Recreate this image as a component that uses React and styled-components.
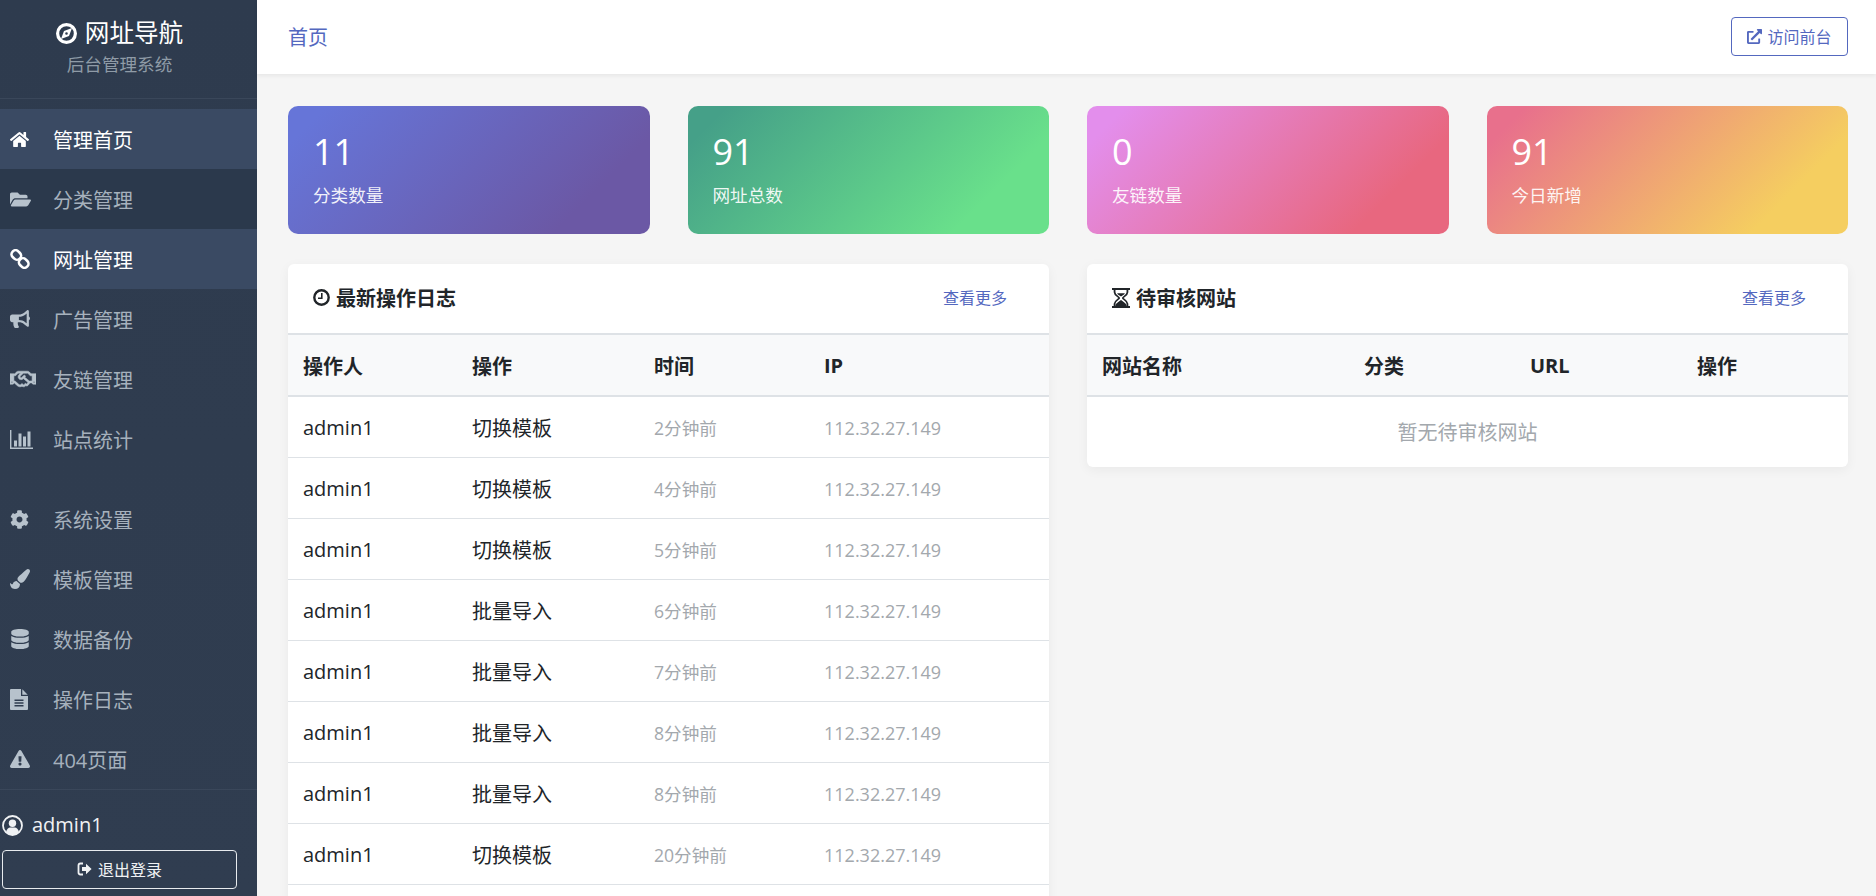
import React from "react";
import styled, { createGlobalStyle } from "styled-components";
import {
  FaHome, FaFolderOpen, FaBullhorn, FaRegHandshake, FaCog, FaPaintBrush,
  FaDatabase, FaExclamationTriangle, FaExternalLinkAlt,
} from "react-icons/fa";

const Global = createGlobalStyle`
  html, body { margin: 0; padding: 0; height: 100%; overflow: hidden; }
  body { font-family: "Open Sans", "Noto Sans CJK SC", sans-serif; background: #f5f5f5; color: #212529; }
  * { box-sizing: border-box; }
`;

const CompassIcon = () => (
  <svg width="21" height="21" viewBox="0 0 21 21">
    <circle cx="10.5" cy="10.5" r="8.9" fill="none" stroke="currentColor" strokeWidth="3.2" />
    <path fillRule="evenodd" fill="currentColor" d="M16 5 13 13 5 16 8 8ZM10.5 9.2a1.3 1.3 0 1 0 0 2.6 1.3 1.3 0 0 0 0-2.6Z" />
  </svg>
);
const UserCircleIcon = () => (
  <svg width="21" height="21" viewBox="0 0 21 21">
    <circle cx="10.5" cy="10.5" r="9.5" fill="none" stroke="currentColor" strokeWidth="1.8" />
    <circle cx="10.5" cy="8.2" r="3.7" fill="currentColor" />
    <path fill="currentColor" d="M4 17.4C4.4 14 6.6 12.4 8.2 12.4h4.6c1.6 0 3.8 1.6 4.2 5a9.5 9.5 0 0 1-13 0Z" />
  </svg>
);
const SignOutIcon = () => (
  <svg width="15" height="14" viewBox="0 0 15 14">
    <path fill="none" stroke="currentColor" strokeWidth="1.8" d="M6 1.5H3.4Q1.5 1.5 1.5 3.4V10.6Q1.5 12.5 3.4 12.5H6" />
    <path fill="currentColor" d="M5 5H9V1.8L14.6 7 9 12.2V9H5Z" />
  </svg>
);
const ClockIcon = () => (
  <svg width="17" height="17" viewBox="0 0 17 17">
    <circle cx="8.5" cy="8.5" r="7.2" fill="none" stroke="currentColor" strokeWidth="2.4" />
    <path fill="none" stroke="currentColor" strokeWidth="1.6" d="M8.8 4V9.2H5" />
  </svg>
);
const HourglassIcon = () => (
  <svg width="18" height="20" viewBox="0 0 14 19" preserveAspectRatio="none">
    <path fill="currentColor" d="M0 0H14V2H0ZM0 17H14V19H0Z" />
    <path fill="none" stroke="currentColor" strokeWidth="1.4" d="M2 2V4C2 7 5.6 8.4 5.6 9.5 5.6 10.6 2 12 2 15V17M12 2V4C12 7 8.4 8.4 8.4 9.5 8.4 10.6 12 12 12 15V17" />
    <path fill="currentColor" d="M2.6 17C2.6 14.4 6 13 7 11.2 8 13 11.4 14.4 11.4 17ZM4 5H10C9.8 6.2 8 7.4 7 8 6 7.4 4.2 6.2 4 5Z" />
  </svg>
);
const ChainIcon = () => (
  <svg width="20" height="20" viewBox="0 0 20 20">
    <g fill="none" stroke="currentColor" strokeWidth="2.6">
      <rect x="1.3" y="2" width="10" height="8" rx="3.8" transform="rotate(45 6.3 6)" />
      <rect x="8.7" y="10" width="10" height="8" rx="3.8" transform="rotate(45 13.7 14)" />
    </g>
  </svg>
);
const BarsIcon = () => (
  <svg width="23" height="19" viewBox="0 0 23 19">
    <path fill="currentColor" d="M0 0H1.4V17.5H23V19H0ZM4 10.5H7V16.5H4ZM8.5 3.5H11.5V16.5H8.5ZM13 6.5H16V16.5H13ZM17.5 1.5H20.5V16.5H17.5Z" />
  </svg>
);
const FileIcon = () => (
  <svg width="18" height="21" viewBox="0 0 18 21">
    <path fill="currentColor" fillRule="evenodd" d="M1 0H11V7H18V20Q18 21 17 21H1Q0 21 0 20V1Q0 0 1 0ZM12.3 0.3 17.7 5.7H12.3ZM4.5 10.5V12H13.5V10.5ZM4.5 13.3V14.8H13.5V13.3ZM4.5 16.1V17.6H13.5V16.1Z" />
  </svg>
);

const Layout = styled.div`display: flex; height: 896px; overflow: hidden;`;

const Sidebar = styled.aside`
  width: 257px; flex: none; height: 896px; display: flex; flex-direction: column;
  background: linear-gradient(180deg, #2e3b4e 0%, #303d50 100%);
`;
const Brand = styled.div`
  height: 99px; padding: 15px 18px 0 0; text-align: center; flex: none;
  border-bottom: 1px solid #3a475a;
`;
const BrandTitle = styled.div`
  display: flex; align-items: center; justify-content: center; gap: 8px;
  font-size: 24.6px; line-height: 36px; color: #fff;
`;
const BrandSub = styled.div`font-size: 17.6px; line-height: 26px; color: #8f9ba7;`;

const Nav = styled.nav`flex: 1; padding-top: 10px;`;
const NavGroup = styled.div`margin-bottom: 20px;`;
const NavItem = styled.a`
  display: flex; align-items: center; height: 60px; padding-left: 10px; font-size: 20px;
  color: ${(p) => (p.$active ? "#fff" : "#a6b1bd")};
  background: ${(p) => (p.$active ? "#3a4a63" : p.$dim ? "#2b394c" : "transparent")};
`;
const NavIcon = styled.span`
  width: 43px; flex: none; display: flex; align-items: center;
  color: ${(p) => (p.$active ? "#fff" : "#b7c2cc")};
`;

const SideFoot = styled.div`
  height: 107px; flex: none; border-top: 1px solid #3a475a; padding: 23px 20px 0 2px;
`;
const UserRow = styled.div`
  display: flex; align-items: center; gap: 9px; font-size: 20px; font-weight: 500; line-height: 24px; color: #f0f2f4;
`;
const Logout = styled.button`
  width: 235px; height: 39px; margin-top: 13px; display: flex; align-items: center; justify-content: center; gap: 6px;
  background: transparent; border: 1px solid #e8ebee; border-radius: 4px; color: #f0f2f4;
  font-family: inherit; font-size: 16px; padding: 0 0 2px;
`;

const Main = styled.main`flex: 1; min-width: 0; display: flex; flex-direction: column;`;
const TopBar = styled.header`
  height: 74px; flex: none; background: #fff; box-shadow: 0 2px 4px rgba(0,0,0,.06);
  display: flex; align-items: center; justify-content: space-between; padding: 0 28px 1px 31px;
  position: relative; z-index: 1;
`;
const Crumb = styled.a`font-size: 20px; color: #5468bf;`;
const Visit = styled.a`
  height: 39px; width: 117px; display: flex; align-items: center; justify-content: center; gap: 5px;
  border: 1px solid #5468bf; border-radius: 4px; color: #5468bf; font-size: 16px; padding-bottom: 1px;
`;

const Content = styled.div`padding: 32px 28px 0 31px; display: flex; flex-direction: column; gap: 30px;`;
const Stats = styled.section`display: grid; grid-template-columns: repeat(4, 1fr); gap: 38px;`;
const Stat = styled.div`
  height: 128px; border-radius: 10px; padding: 21px 25px 0; color: #fff;
  background: linear-gradient(135deg, ${(p) => p.$from} 8%, ${(p) => p.$to} 80%);
`;
const StatNum = styled.div`font-size: 36px; line-height: 50px;`;
const StatLabel = styled.div`font-size: 17.6px; line-height: 26px; margin-top: 5px; color: rgba(255,255,255,.92);`;

const Panels = styled.section`display: grid; grid-template-columns: 1fr 1fr; gap: 38px; align-items: start;`;
const Panel = styled.div`
  background: #fff; border-radius: 6px; box-shadow: 0 3px 12px rgba(0,0,0,.05); overflow: hidden;
  padding-bottom: ${(p) => (p.$tall ? "40px" : "0")};
`;
const PanelHead = styled.div`
  height: 69px; display: flex; align-items: center; justify-content: space-between; padding: 0 42px 2px 25px;
`;
const PanelTitle = styled.h3`
  margin: 0; display: flex; align-items: center; gap: 6px; font-size: 20px; font-weight: 700; color: #212529;
`;
const More = styled.a`font-size: 16px; color: #5468bf; padding-bottom: 2px;`;
const Table = styled.table`width: 100%; border-collapse: collapse; table-layout: fixed; font-size: 20px;`;
const Th = styled.th`
  height: 62px; padding: 0 15px; text-align: left; font-weight: 700; background: #f8f9fa;
  border-top: 2px solid #dee2e6; border-bottom: 2px solid #dee2e6; color: #212529;
`;
const Td = styled.td`
  height: 61px; padding: 2px 15px 0; border-bottom: 1px solid #dee2e6; color: #212529;
`;
const MutedTd = styled(Td)`color: #a3a8ad; font-size: 17.6px;`;
const IpTd = styled(MutedTd)`font-size: 18px;`;
const Empty = styled.td`height: 71px; padding-bottom: 2px; text-align: center; color: #a3a8ad;`;

const navA = [
  ["管理首页", <FaHome size={19} />, "a"], ["分类管理", <FaFolderOpen size={21} />, "d"], ["网址管理", <ChainIcon />, "a"],
  ["广告管理", <FaBullhorn size={20} />], ["友链管理", <FaRegHandshake size={26} stroke="currentColor" strokeWidth={14} />], ["站点统计", <BarsIcon />],
];
const navB = [
  ["系统设置", <FaCog size={19} />], ["模板管理", <FaPaintBrush size={20} />], ["数据备份", <FaDatabase size={20} />],
  ["操作日志", <FileIcon />], ["404页面", <FaExclamationTriangle size={20} />],
];
const stats = [
  [11, "分类数量", "#6675d8", "#6b58a5"], [91, "网址总数", "#45a088", "#69e08b"],
  [0, "友链数量", "#e38eec", "#e8677f"], [91, "今日新增", "#e8708c", "#f5ce60"],
];
const logs = [
  ["切换模板", "2分钟前"], ["切换模板", "4分钟前"], ["切换模板", "5分钟前"], ["批量导入", "6分钟前"],
  ["批量导入", "7分钟前"], ["批量导入", "8分钟前"], ["批量导入", "8分钟前"], ["切换模板", "20分钟前"],
];

function Item({ label, icon, state }) {
  const active = state === "a";
  return (
    <NavItem $active={active} $dim={state === "d"}>
      <NavIcon $active={active}>{icon}</NavIcon>
      {label}
    </NavItem>
  );
}

export default function App() {
  return (
    <Layout>
      <Global />
      <Sidebar>
        <Brand>
          <BrandTitle><CompassIcon />网址导航</BrandTitle>
          <BrandSub>后台管理系统</BrandSub>
        </Brand>
        <Nav>
          <NavGroup>
            {navA.map(([l, ic, s]) => <Item key={l} label={l} icon={ic} state={s} />)}
          </NavGroup>
          {navB.map(([l, ic]) => <Item key={l} label={l} icon={ic} />)}
        </Nav>
        <SideFoot>
          <UserRow><UserCircleIcon />admin1</UserRow>
          <Logout><SignOutIcon />退出登录</Logout>
        </SideFoot>
      </Sidebar>
      <Main>
        <TopBar>
          <Crumb>首页</Crumb>
          <Visit><FaExternalLinkAlt size={15} />访问前台</Visit>
        </TopBar>
        <Content>
          <Stats>
            {stats.map(([n, l, a, b]) => (
              <Stat key={l} $from={a} $to={b}>
                <StatNum>{n}</StatNum>
                <StatLabel>{l}</StatLabel>
              </Stat>
            ))}
          </Stats>
          <Panels>
            <Panel $tall>
              <PanelHead>
                <PanelTitle><ClockIcon />最新操作日志</PanelTitle>
                <More>查看更多</More>
              </PanelHead>
              <Table>
                <colgroup><col width="169" /><col width="182" /><col width="170" /><col /></colgroup>
                <thead><tr><Th>操作人</Th><Th>操作</Th><Th>时间</Th><Th>IP</Th></tr></thead>
                <tbody>
                  {logs.map(([a, t], i) => (
                    <tr key={i}>
                      <Td>admin1</Td><Td>{a}</Td><MutedTd>{t}</MutedTd><IpTd>112.32.27.149</IpTd>
                    </tr>
                  ))}
                </tbody>
              </Table>
            </Panel>
            <Panel>
              <PanelHead>
                <PanelTitle><HourglassIcon />待审核网站</PanelTitle>
                <More>查看更多</More>
              </PanelHead>
              <Table>
                <colgroup><col width="262" /><col width="166" /><col width="167" /><col /></colgroup>
                <thead><tr><Th>网站名称</Th><Th>分类</Th><Th>URL</Th><Th>操作</Th></tr></thead>
                <tbody><tr><Empty colSpan={4}>暂无待审核网站</Empty></tr></tbody>
              </Table>
            </Panel>
          </Panels>
        </Content>
      </Main>
    </Layout>
  );
}
